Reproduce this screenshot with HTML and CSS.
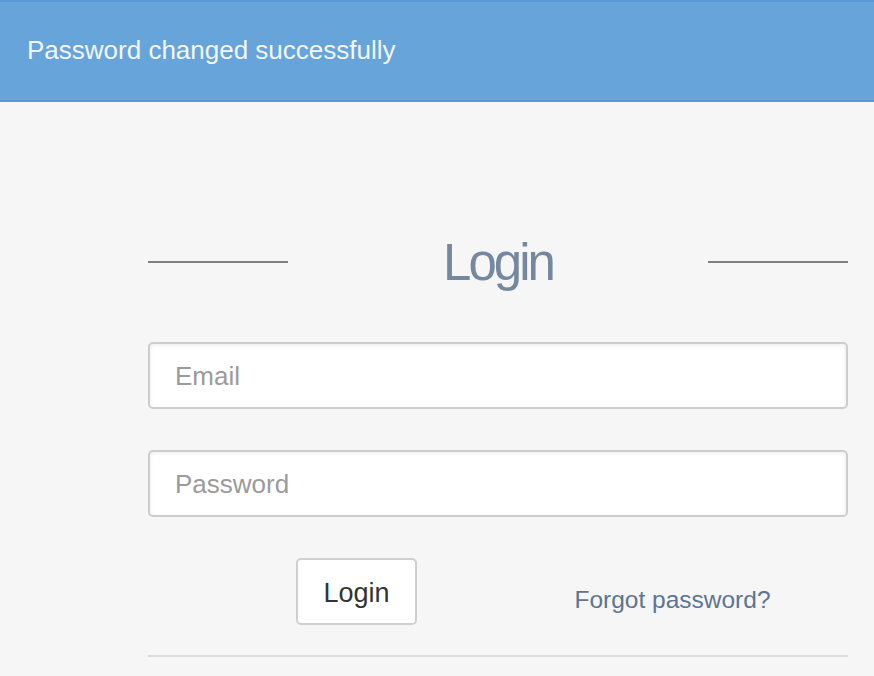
FILE: index.html
```html
<!DOCTYPE html>
<html>
<head>
<meta charset="utf-8">
<link rel="stylesheet" href="styles.css">
</head>
<body>
<div class="banner">Password changed successfully</div>
<main class="login">
  <div class="heading">
    <span class="rule"></span>
    <h1 class="title">Login</h1>
    <span class="rule"></span>
  </div>
  <input class="field" type="email" placeholder="Email">
  <input class="field" type="password" placeholder="Password">
  <div class="actions">
    <div class="left"><button class="btn" type="button">Login</button></div>
    <div class="right"><a class="forgot" href="#">Forgot password?</a></div>
  </div>
  <hr class="divider">
</main>
</body>
</html>
```

FILE: styles.css
```css
html, body {
  margin: 0;
  padding: 0;
  background: #f6f6f6;
  font-family: "Liberation Sans", Arial, sans-serif;
}
.banner {
  box-sizing: border-box;
  height: 102px;
  background: #66a4da;
  border-top: 2px solid #5798d6;
  border-bottom: 2px solid #5798d6;
  color: #f3f6f9;
  font-size: 26px;
  padding-left: 27px;
  display: flex;
  align-items: center;
  padding-bottom: 1px;
}
.login {
  width: 700px;
  margin-left: 148px;
  padding-top: 130px;
  display: flex;
  flex-direction: column;
}
.heading {
  height: 60px;
  display: flex;
  align-items: center;
}
.rule {
  width: 140px;
  height: 2px;
  background: #808080;
}
.title {
  flex: 1;
  margin: 0;
  text-align: center;
  font-weight: normal;
  font-size: 51px;
  line-height: 60px;
  letter-spacing: -3px;
  color: #7588a0;
  padding-top: 2px;
}
.field {
  box-sizing: border-box;
  height: 67px;
  margin: 0;
  margin-top: 50px;
  width: 100%;
  border: 2px solid #cdcdcd;
  border-radius: 5px;
  background: #fff;
  box-shadow: inset 0 1px 4px rgba(0,0,0,0.08);
  padding: 2px 0 0 25px;
  font-family: "Liberation Sans", Arial, sans-serif;
  font-size: 26px;
  color: #333;
  outline: none;
}
.field + .field {
  margin-top: 41px;
}
.field::placeholder {
  color: #9b9b9b;
}
.actions {
  margin-top: 41px;
  display: grid;
  grid-template-columns: 350px 350px;
}
.left {
  padding-left: 148px;
}
.btn {
  box-sizing: border-box;
  width: 121px;
  height: 67px;
  background: #fff;
  border: 2px solid #cfcfcf;
  border-radius: 5px;
  font-family: "Liberation Sans", Arial, sans-serif;
  font-size: 27px;
  color: #333;
  padding: 4px 0 0;
}
.right {
  display: flex;
  justify-content: center;
  align-items: center;
  padding-top: 17px;
  padding-right: 1px;
}
.forgot {
  color: #5d7592;
  text-decoration: none;
  font-size: 24.5px;
}
.divider {
  margin: 30px 0 0;
  border: 0;
  height: 2px;
  background: #dcdcdc;
}
```
